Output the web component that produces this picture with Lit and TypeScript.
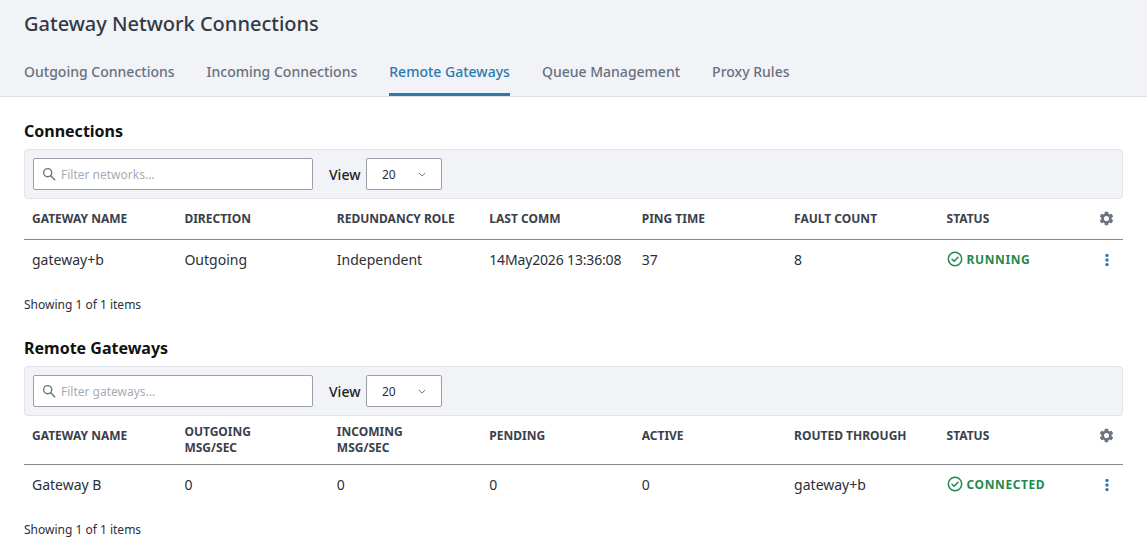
import { LitElement, css, html, svg } from 'lit';
import { customElement } from 'lit/decorators.js';

interface Section {
  title: string;
  placeholder: string;
  columns: string[][];
  cells: string[];
  status: string;
}

const sections: Section[] = [
  {
    title: 'Connections',
    placeholder: 'Filter networks...',
    columns: [['GATEWAY NAME'], ['DIRECTION'], ['REDUNDANCY ROLE'], ['LAST COMM'], ['PING TIME'], ['FAULT COUNT'], ['STATUS']],
    cells: ['gateway+b', 'Outgoing', 'Independent', '14May2026 13:36:08', '37', '8'],
    status: 'RUNNING',
  },
  {
    title: 'Remote Gateways',
    placeholder: 'Filter gateways...',
    columns: [['GATEWAY NAME'], ['OUTGOING', 'MSG/SEC'], ['INCOMING', 'MSG/SEC'], ['PENDING'], ['ACTIVE'], ['ROUTED THROUGH'], ['STATUS']],
    cells: ['Gateway B', '0', '0', '0', '0', 'gateway+b'],
    status: 'CONNECTED',
  },
];

const tabs = ['Outgoing Connections', 'Incoming Connections', 'Remote Gateways', 'Queue Management', 'Proxy Rules'];

const searchIcon = svg`<svg viewBox="0 0 16 16" width="14" height="14" fill="none" stroke="#6b7280" stroke-width="1.6"><circle cx="6.5" cy="6.5" r="4.6"/><path d="M10 10l4.5 4.5" stroke-linecap="round"/></svg>`;
const chevron = svg`<svg viewBox="0 0 10 6" width="8" height="5" fill="none" stroke="#6b7280" stroke-width="1.2"><path d="M1 1l4 4 4-4"/></svg>`;
const gear = svg`<svg viewBox="0 0 24 24" width="17" height="17" fill="#6b7280"><path d="M19.14 12.94c.04-.3.06-.61.06-.94s-.02-.64-.07-.94l2.03-1.58a.49.49 0 0 0 .12-.61l-1.92-3.32a.49.49 0 0 0-.59-.22l-2.39.96a7 7 0 0 0-1.62-.94l-.36-2.54a.48.48 0 0 0-.48-.41h-3.84a.48.48 0 0 0-.47.41l-.36 2.54a7.2 7.2 0 0 0-1.62.94l-2.39-.96a.49.49 0 0 0-.59.22L2.74 8.87a.48.48 0 0 0 .12.61l2.03 1.58c-.05.3-.09.63-.09.94s.02.64.07.94l-2.03 1.58a.49.49 0 0 0-.12.61l1.92 3.32c.12.22.37.29.59.22l2.39-.96c.5.38 1.03.7 1.62.94l.36 2.54c.05.24.24.41.48.41h3.84c.24 0 .44-.17.47-.41l.36-2.54a6.9 6.9 0 0 0 1.62-.94l2.39.96c.22.08.47 0 .59-.22l1.92-3.32a.48.48 0 0 0-.12-.61l-2.01-1.58zM12 15.6a3.6 3.6 0 1 1 0-7.2 3.6 3.6 0 0 1 0 7.2z"/></svg>`;
const kebab = svg`<svg viewBox="0 0 4 14" width="4" height="14" fill="#2a7ab0"><circle cx="2" cy="2.4" r="1.7"/><circle cx="2" cy="7" r="1.7"/><circle cx="2" cy="11.6" r="1.7"/></svg>`;
const check = svg`<svg viewBox="0 0 16 16" width="16" height="16" fill="none" stroke="#1f8a50" stroke-width="1.5"><circle cx="8" cy="8" r="6.7"/><path d="M5 8.2l2.1 2.1L11 6.2" stroke-linecap="round" stroke-linejoin="round"/></svg>`;

@customElement('app-root')
export class AppRoot extends LitElement {
  static override styles = css`
    :host {
      display: block;
      font-family: 'Noto Sans', sans-serif;
      color: #2b2f38;
      background: #fff;
    }

    .header {
      background: #f1f3f7;
      border-bottom: 1px solid #dcdfe5;
      padding: 0 24px;
      height: 96px;
    }

    h1 {
      margin: 0;
      padding-top: 10px;
      font-size: 20px;
      line-height: 28px;
      font-weight: 500;
      color: #323a45;
    }

    .tabs {
      display: flex;
      gap: 32px;
      margin-top: 13px;
    }

    .tab {
      height: 45px;
      line-height: 42px;
      font-size: 14px;
      font-weight: 500;
      letter-spacing: 0.008px;
      color: #697080;
      box-sizing: border-box;
    }

    .tab.active {
      color: #2a7ab0;
      border-bottom: 3px solid #2a7ab0;
    }

    .content {
      padding: 0 24px;
    }

    h2 {
      margin: 0;
      font-size: 16px;
      line-height: 22px;
      font-weight: 700;
      color: #111;
    }

    .section-title-first {
      padding-top: 23px;
    }

    .section-title {
      padding-top: 22px;
    }

    .toolbar {
      margin-top: 7px;
      height: 50px;
      box-sizing: border-box;
      background: #f1f3f7;
      border: 1px solid #e0e3e9;
      border-radius: 4px;
      display: flex;
      align-items: center;
      padding: 0 8px;
    }

    .filter {
      width: 280px;
      height: 32px;
      box-sizing: border-box;
      background: #fff;
      border: 1px solid #9a9fa8;
      border-radius: 2px;
      display: flex;
      align-items: center;
      gap: 5px;
      padding: 0 8px;
      font-size: 12px;
      color: #a8acb4;
    }

    .view {
      margin-left: 16px;
      font-size: 14px;
      font-weight: 500;
      color: #1e2229;
    }

    .select {
      margin-left: 5.5px;
      width: 76px;
      height: 32px;
      box-sizing: border-box;
      background: #fff;
      border: 1px solid #9a9fa8;
      border-radius: 2px;
      display: flex;
      align-items: center;
      justify-content: space-between;
      padding: 0 15px;
      font-size: 12px;
      color: #2b2f38;
    }

    .row {
      display: grid;
      grid-template-columns: repeat(7, 152.43px) 1fr;
    }

    .head {
      min-height: 40px;
      border-bottom: 1px solid #868a92;
      font-size: 12px;
      line-height: 16px;
      font-weight: 700;
      color: #3a404b;
    }

    .th {
      height: 39px;
      box-sizing: border-box;
      display: flex;
      align-items: center;
      align-self: start;
      padding-left: 8px;
    }

    .th.wrapped {
      height: auto;
      padding-top: 8px;
      padding-bottom: 8px;
    }

    .body {
      height: 40px;
      align-items: center;
      font-size: 14px;
      color: #2b2f38;
    }

    .td {
      padding: 0 0 2px 8px;
    }

    .date {
      letter-spacing: -0.16px;
    }

    .th.icon-cell,
    .icon-cell {
      display: flex;
      align-items: center;
      justify-content: center;
      padding-left: 0;
      line-height: 0;
    }

    .status {
      display: flex;
      align-items: center;
      gap: 4px;
      font-size: 12px;
      font-weight: 700;
      letter-spacing: 0.6px;
      color: #1f8a50;
    }

    .count {
      margin-top: 15px;
      font-size: 12px;
      line-height: 20px;
      color: #2b2f38;
    }
  `;

  private renderSection(s: Section, first: boolean) {
    return html`
      <h2 class=${first ? 'section-title-first' : 'section-title'}>${s.title}</h2>
      <div class="toolbar">
        <div class="filter">${searchIcon}<span>${s.placeholder}</span></div>
        <span class="view">View</span>
        <div class="select"><span>20</span>${chevron}</div>
      </div>
      <div class="row head">
        ${s.columns.map(
          (c) => html`<div class="th ${c.length > 1 ? 'wrapped' : ''}">
            <span>${c.map((l, i) => html`${i ? html`<br />` : ''}${l}`)}</span>
          </div>`,
        )}
        <div class="th icon-cell">${gear}</div>
      </div>
      <div class="row body">
        ${s.cells.map((c) => html`<div class="td ${c.startsWith('14May') ? 'date' : ''}">${c}</div>`)}
        <div class="td status">${check}<span>${s.status}</span></div>
        <div class="icon-cell">${kebab}</div>
      </div>
      <div class="count">Showing 1 of 1 items</div>
    `;
  }

  override render() {
    return html`
      <div class="header">
        <h1>Gateway Network Connections</h1>
        <div class="tabs">
          ${tabs.map((t) => html`<div class="tab ${t === 'Remote Gateways' ? 'active' : ''}">${t}</div>`)}
        </div>
      </div>
      <div class="content">${sections.map((s, i) => this.renderSection(s, i === 0))}</div>
    `;
  }
}
